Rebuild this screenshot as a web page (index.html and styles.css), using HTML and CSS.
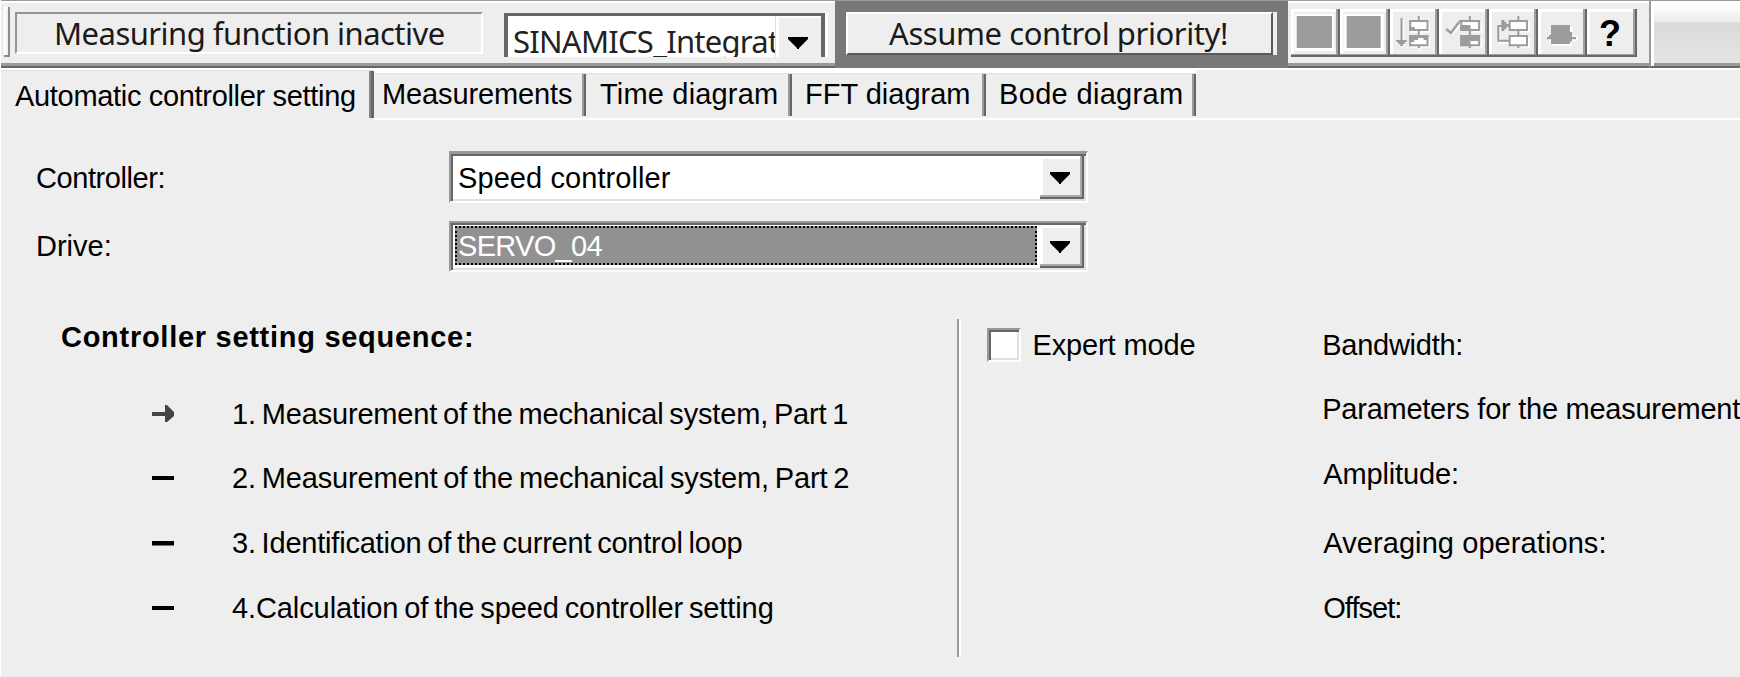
FILE: index.html
```
<!DOCTYPE html>
<html lang="en">
<head>
<meta charset="utf-8">
<title>Automatic controller setting</title>
<link rel="stylesheet" href="styles.css">
</head>
<body>
<div class="window">
  <div class="toolbar">
    <div class="band band-status">
      <span class="grip"></span>
      <div class="status">Measuring function inactive</div>
      <div class="device">
        <span class="device-name">SINAMICS_Integrat</span>
        <span class="device-button"><svg width="20" height="12" viewBox="0 0 20 12"><path d="M0 0H20V2L11 11V12H9V11L0 2Z" fill="#000"/></svg></span>
      </div>
    </div>
    <div class="band band-control">
      <div class="priority">Assume control priority!</div>
    </div>
    <div class="band band-tools">
      <span class="tool"><svg viewBox="93 27 148.2 144"><path d="M105 42H222V153H105Z" fill="#fff"/><path d="M110 48H216V144H110Z" fill="#9c9c9c"/></svg></span>
      <span class="tool"><svg viewBox="241 27 148.2 144"><path d="M252 42H372V153H252Z" fill="#fff"/><path d="M261 48H363V144H261Z" fill="#9c9c9c"/></svg></span>
      <span class="tool"><svg viewBox="389.5 27 148.2 144"><g transform="translate(5 5)" fill="none" stroke="#fff" stroke-width="5"><path d="M424 54V130M450 63H502V90H450ZM450 108H502V136H450ZM476 48V63M476 90V108M476 136V144"/></g><path d="M450 63H502V90H450ZM450 108H502V136H450Z" fill="#fff"/><path d="M424 54V122M450 63H502V90H450ZM450 108H502V136H450ZM476 48V63M476 90V108M476 136V144" fill="none" stroke="#9c9c9c" stroke-width="6"/><path d="M408 120H440V126H434V132H428V138H420V132H414V126H408ZM448 81H464V93H448ZM448 105H504V120H490V114H474V120H462V126H448Z" fill="#9c9c9c"/></svg></span>
      <span class="tool"><svg viewBox="537.5 27 148.2 144"><path d="M604 63H658V90H604ZM604 108H658V136H604Z" fill="#fff"/><path d="M665 66V95H638M665 112V140H640M562 92L574 104L604 72" fill="none" stroke="#fff" stroke-width="5"/><path d="M604 63H658V90H604ZM604 108H658V136H604ZM630 48V63M630 90V108M630 136V144M598 63H610M632 120H658" fill="none" stroke="#9c9c9c" stroke-width="6"/><path d="M602 75H632V93H602ZM602 106H632V138H602ZM630 106H660V120H630Z" fill="#9c9c9c"/><path d="M559 87L573 99L598 66" fill="none" stroke="#9c9c9c" stroke-width="7"/></svg></span>
      <span class="tool"><svg viewBox="686 27 148.2 144"><path d="M748 63H800V90H748ZM748 108H800V136H748Z" fill="#fff"/><path d="M806 66V95H778M806 112V141H778M718 84V120M718 129H746" fill="none" stroke="#fff" stroke-width="5"/><path d="M748 63H800V90H748ZM748 108H800V136H748ZM774 48V63M774 90V108M774 136V144M748 122H714V78H724" fill="none" stroke="#9c9c9c" stroke-width="6"/><path d="M723 60H732V66H738V72H746V81H738V87H732V93H723Z" fill="#9c9c9c"/></svg></span>
      <span class="tool"><svg viewBox="834 27 148.2 144"><path d="M878 81H936V108H952V124H936V138H878V124H868V114H878Z" fill="#fff"/><path d="M873 75H930V96H936V111H948V118H936V125H930V132H873V118H861V111H867V105H873Z" fill="#9c9c9c"/></svg></span>
      <span class="tool tool-help">?</span>
    </div>
    <div class="band-rest"></div>
  </div>

  <div class="tabs">
    <div class="tab tab-active">Automatic controller setting</div>
    <div class="tab tab-measurements">Measurements</div>
    <div class="tab tab-time">Time diagram</div>
    <div class="tab tab-fft">FFT diagram</div>
    <div class="tab tab-bode">Bode diagram</div>
    <div class="tab-rest"></div>
  </div>

  <div class="page">
    <div class="form">
      <div class="label label-controller">Controller:</div>
      <div class="combo">
        <span class="combo-value">Speed controller</span>
        <span class="combo-button"><svg width="20" height="12" viewBox="0 0 20 12"><path d="M0 0H20V2L11 11V12H9V11L0 2Z" fill="#000"/></svg></span>
      </div>
      <div class="label label-drive">Drive:</div>
      <div class="combo combo-focus">
        <span class="combo-value">SERVO_04</span>
        <span class="combo-button"><svg width="20" height="12" viewBox="0 0 20 12"><path d="M0 0H20V2L11 11V12H9V11L0 2Z" fill="#000"/></svg></span>
      </div>
    </div>

    <div class="details">
      <div class="sequence">
        <div class="heading">Controller setting sequence:</div>
        <div class="steps">
          <div class="step"><svg class="mark" viewBox="0 0 22 18"><path d="M0 7H13V0H15L22 7V11L15 17H13V11H0Z" fill="#444"/></svg><span class="step-one">1. Measurement of the mechanical system, Part 1</span></div>
          <div class="step"><svg class="mark" viewBox="0 0 22 18"><path d="M0 7H22V11H0Z"/></svg><span class="step-two">2. Measurement of the mechanical system, Part 2</span></div>
          <div class="step"><svg class="mark" viewBox="0 0 22 18"><path d="M0 7H22V11.500H0Z"/></svg><span class="step-three">3. Identification of the current control loop</span></div>
          <div class="step"><svg class="mark" viewBox="0 0 22 18"><path d="M0 7H22V11H0Z"/></svg><span class="step-four">4.Calculation of the speed controller setting</span></div>
        </div>
      </div>
      <div class="expert"><span class="checkbox"></span><span class="expert-label">Expert mode</span></div>
      <div class="params">
        <div class="param-bandwidth">Bandwidth:</div>
        <div class="param-measurement">Parameters for the measurement</div>
        <div class="param-amplitude">Amplitude:</div>
        <div class="param-averaging">Averaging operations:</div>
        <div class="param-offset">Offset:</div>
      </div>
    </div>
  </div>
</div>
</body>
</html>
```

FILE: styles.css
```
* { box-sizing: border-box; }

body {
  margin: 0;
  background: #eee;
  color: #000;
  font: 29px/32px "Liberation Sans", Arial, sans-serif;
  white-space: nowrap;
}

svg { display: block; }

.window {
  width: 1740px;
  height: 677px;
  overflow: hidden;
  display: flex;
  flex-direction: column;
  border-left: 1px solid #fff;
}

/* Toolbar */
.toolbar {
  flex: none;
  height: 68px;
  display: flex;
  border-top: 1px solid #9a9a9a;
}

.band {
  flex: none;
  height: 67px;
  display: flex;
  align-items: flex-start;
  border-top: 2px solid #fff;
  border-bottom: 2px solid #666;
  box-shadow: inset 0 -3px #9a9a9a;
}

.band-status {
  width: 834px;
  padding-left: 3px;
  font: 31px/42px "Noto Sans", "Open Sans", sans-serif;
}

.grip {
  width: 6px;
  height: 50px;
  margin-top: 4px;
  border: solid #8c8c8c;
  border-width: 0 2px 2px 0;
  box-shadow: inset 2px 2px #fff;
}

.status {
  width: 468px;
  height: 42px;
  margin: 9px 0 0 5px;
  padding-left: 37px;
  line-height: 39px;
  letter-spacing: -0.53px;
  color: #1a1a1a;
  border: 2px solid;
  border-color: #949494 #fff #fff #949494;
}

.device {
  width: 321px;
  height: 44px;
  margin: 10px 0 0 21px;
  display: flex;
  overflow: hidden;
  background: #fff;
  border: solid #666;
  border-width: 3px 4px 0 4px;
  box-shadow: 3px 0 #fff;
}

.device-name {
  width: 268px;
  padding-left: 5px;
  margin-top: 4px;
  letter-spacing: -0.75px;
  color: #222;
  overflow: hidden;
}

.device-button {
  flex: 1;
  height: 44px;
  padding: 19px 0 0 9px;
  background: #eee;
  border: solid #fff;
  border-width: 2px 0 0 3px;
  box-shadow: -1px 0 #ddd;
}

.band-control {
  width: 453px;
  background: #787878;
  border-color: #787878;
  box-shadow: none;
  padding: 9px 0 0 11px;
  font: 31px/42px "Noto Sans", "Open Sans", sans-serif;
}

.priority {
  width: 427px;
  height: 43px;
  padding-left: 41px;
  line-height: 39px;
  letter-spacing: -0.42px;
  color: #1a1a1a;
  background: #eee;
  border: 2px solid;
  border-color: #fff #5a5a5a #5a5a5a #fff;
  box-shadow: 4px 0 #eee;
}

.band-tools {
  width: 361px;
  padding: 6px 0 0 3px;
}

.tool {
  flex: none;
  width: 49.4px;
  height: 48px;
  background: #eee;
  box-shadow: inset -2px -2px #686868, inset -4px -3px #a0a0a0, inset 3px 3px #fff;
}

.tool svg { width: 49.4px; height: 48px; }

.tool-help {
  padding-right: 4px;
  text-align: center;
  font-size: 36px;
  font-weight: bold;
  line-height: 49px;
}

.band-rest {
  flex: 1;
  height: 67px;
  border: solid #9a9a9a;
  border-width: 0 0 2px 2px;
  border-bottom-color: #666;
  box-shadow: inset 3px 0 #fff, inset 0 -3px #9a9a9a;
  background: linear-gradient(#fff 0, #fff 3px, #ebebeb 21px, #d9d9d9 22px, #e4e4e4 61px);
}

/* Tabs */
.tabs {
  flex: none;
  height: 52px;
  display: flex;
  align-items: stretch;
  border-top: 2px solid #fff;
}

.tab {
  flex: none;
  height: 50px;
  padding-top: 5px;
  border-top: 3px solid #fff;
  border-bottom: 2px solid #fff;
  background:
    linear-gradient(90deg, #999 50%, #666 50%) right 0 top 1px / 4px 42px no-repeat,
    linear-gradient(#e2e2e2, #e2e2e2) 0 0 / 100% 1px no-repeat;
}

.tab-active {
  width: 373px;
  padding: 10px 0 0 14px;
  border: 0;
  letter-spacing: -0.32px;
  background:
    linear-gradient(90deg, #888 40%, #666 40%) right 0 top 1px / 5px 47px no-repeat,
    linear-gradient(#e2e2e2, #e2e2e2) 0 0 / 100% 1px no-repeat;
}

.tab-measurements { width: 212px; padding-left: 8px; letter-spacing: -0.12px; }
.tab-time { width: 206px; padding-left: 14px; letter-spacing: 0.18px; }
.tab-fft { width: 194px; padding-left: 13px; }
.tab-bode { width: 210px; padding-left: 13px; letter-spacing: 0.33px; }
.tab-rest { flex: 1; border-bottom: 2px solid #fff; }

/* Page */
.form {
  display: grid;
  grid-template-columns: 448px 639px;
  grid-template-rows: 52px 51px;
  row-gap: 18px;
  padding-top: 31px;
}

.label { padding: 11px 0 0 35px; }
.label-controller { letter-spacing: -0.42px; }
.label-drive { padding: 9px 0 0 35px; letter-spacing: 0; }

.combo {
  display: flex;
  background: #fff;
  border: 2px solid;
  border-color: #999 #fff #fff #999;
  border-top-width: 3px;
  box-shadow: inset 2px 2px #666, inset -2px -2px #e0e0e0;
  padding: 2px 2px 2px 2px;
}

.combo-value {
  flex: 1;
  padding: 6px 0 0 5px;
  letter-spacing: 0.08px;
}

.combo-button {
  width: 44px;
  padding: 16px 0 0 10px;
  background: #eee;
  box-shadow: inset -2px -2px #666, inset -4px -4px #aaa, inset 3px 3px #fff;
}

.combo-focus {
  border-top-width: 2px;
}

.combo-focus .combo-value {
  margin: 1px 3px 3px 2px;
  padding: 2px 0 0 1px;
  border: 2px dotted #000;
  background: #919191;
  color: #fff;
  letter-spacing: -0.69px;
}

.details {
  display: flex;
  padding-top: 47px;
}

.sequence {
  width: 959px;
  height: 338px;
  padding: 2px 0 0 60px;
  border-right: 2px solid #999;
  box-shadow: 2px 0 #fff;
}

.heading {
  font-weight: bold;
  letter-spacing: 0.72px;
}

.steps {
  display: grid;
  grid-template-rows: 64px 65px 65px 32px;
  padding: 45px 0 0 91px;
}

.step {
  display: flex;
  align-items: flex-start;
  word-spacing: -2px;
}

.mark {
  width: 22px;
  height: 18px;
  margin: 7px 58px 0 0;
}

.step-one { letter-spacing: -0.17px; }
.step-two { letter-spacing: -0.15px; }
.step-three { letter-spacing: -0.21px; }
.step-four { letter-spacing: -0.1px; }

.expert {
  display: flex;
  align-items: flex-start;
  width: 363px;
  padding: 9px 0 0 28px;
  letter-spacing: -0.13px;
}

.checkbox {
  width: 34px;
  height: 34px;
  margin-right: 11px;
  background: #fff;
  border: 2px solid;
  border-color: #999 #fff #fff #999;
  box-shadow: inset 2px 2px #666, inset -2px -2px #e0e0e0;
}

.expert-label { margin-top: 1px; }

.params {
  display: grid;
  grid-template-rows: 64px 65px 69px 65px 32px;
  padding-top: 10px;
}

.param-bandwidth { letter-spacing: -0.27px; }
.param-measurement { letter-spacing: -0.26px; }
.param-amplitude { letter-spacing: -0.15px; padding-left: 1px; }
.param-averaging { letter-spacing: 0.08px; padding-left: 1px; }
.param-offset { letter-spacing: -0.97px; padding-left: 1px; }
```
